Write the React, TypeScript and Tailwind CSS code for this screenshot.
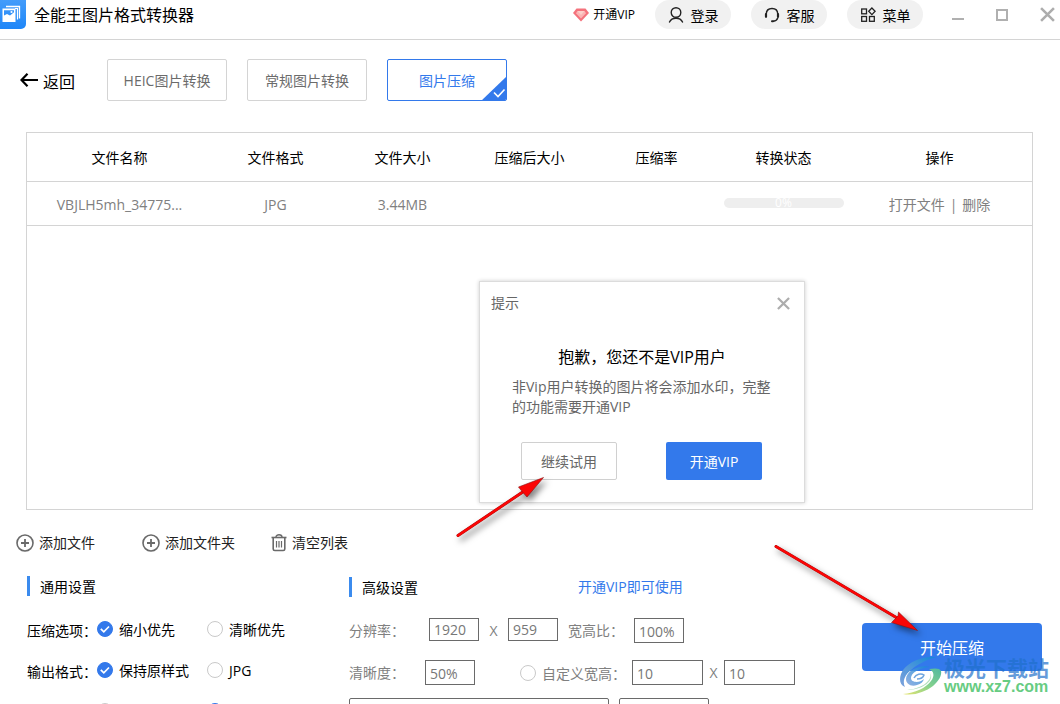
import type { ReactNode } from 'react';

function LogoIcon() {
  return (
    <svg width="26" height="29" viewBox="0 0 26 29" aria-hidden="true">
      <defs>
        <linearGradient id="logoFill" x1="0" y1="0" x2="0" y2="1">
          <stop offset="0" stopColor="#4aa0fb" />
          <stop offset="1" stopColor="#1e86f8" />
        </linearGradient>
      </defs>
      <rect x="-6" y="-5" width="32" height="34" rx="5" fill="url(#logoFill)" />
      <path d="M6 6.500h13.500v12" fill="none" stroke="#fff" strokeWidth="1.300" />
      <path d="M15 8.500h2.500v11" fill="none" stroke="#fff" strokeWidth="1.200" />
      <path
        fillRule="evenodd"
        fill="#fff"
        d="M2.500 8.500h13v13.500h-13zM4 10.200v5.300l3-1.500 3 1.500 4-3.300v-2z"
      />
      <circle cx="11.500" cy="12" r="1.100" fill="#fff" />
    </svg>
  );
}

function DiamondIcon() {
  return (
    <svg width="16" height="14" viewBox="0 0 16 14" aria-hidden="true">
      <path d="M3.500 0.500h9L16 5 8 13.500 0 5z" fill="#f4727c" />
      <path d="M4.500 3h7l1.500 2.200L8 10.500 3 5.200z" fill="#fbb4b4" />
      <path d="M4.500 3h7l-3.500 4z" fill="#fccfca" />
    </svg>
  );
}

function UserIcon() {
  return (
    <svg width="16" height="16" viewBox="0 0 16 16" fill="none" stroke="#222" strokeWidth="1.400" strokeLinecap="round" aria-hidden="true">
      <circle cx="8" cy="5.500" r="4.800" />
      <path d="M1.500 15c1.200-2.800 3.500-3.800 6.500-3.800s5.300 1 6.500 3.800" />
    </svg>
  );
}

function HeadsetIcon() {
  return (
    <svg width="16" height="16" viewBox="0 0 16 16" fill="none" stroke="#222" strokeWidth="1.400" strokeLinecap="round" aria-hidden="true">
      <path d="M2.300 7C2.300 3.500 4.700 1.500 8 1.500S13.700 3.500 13.700 7" />
      <path d="M2 7.200v2.600M14 7.200v2.600" strokeWidth="2.200" />
      <path d="M13.700 11c-.6 2-2.200 3-4.200 3.200" />
      <path d="M8 14.300h1" strokeWidth="2" />
    </svg>
  );
}

function MenuIcon() {
  return (
    <svg width="16" height="16" viewBox="0 0 16 16" fill="none" stroke="#222" strokeWidth="1.300" aria-hidden="true">
      <rect x="1.700" y="2" width="4.800" height="4.800" />
      <rect x="1.700" y="9.500" width="4.800" height="4.800" />
      <rect x="9.500" y="9.500" width="4.800" height="4.800" />
      <path d="M11.900 1l3.200 3.300-3.200 3.300-3.200-3.300z" />
    </svg>
  );
}

function PlusCircleIcon() {
  return (
    <svg width="18" height="18" viewBox="0 0 18 18" fill="none" stroke="#6a6a6a" aria-hidden="true">
      <circle cx="9" cy="9" r="8" strokeWidth="1.600" />
      <path d="M9 5v8M5 9h8" strokeWidth="1.800" />
    </svg>
  );
}

function TrashIcon() {
  return (
    <svg width="16" height="18" viewBox="0 0 16 18" fill="none" stroke="#6a6a6a" aria-hidden="true">
      <path d="M0.500 3.500h15" strokeWidth="1.600" />
      <path d="M5 3c0-3 6-3 6 0" strokeWidth="1.400" />
      <path d="M2.200 4v11c0 1 .6 1.500 1.600 1.500h8.400c1 0 1.600-.5 1.600-1.500V4" strokeWidth="1.600" />
      <path d="M5.500 7v6.500M8 7v6.500M10.500 7v6.500" strokeWidth="1.200" />
    </svg>
  );
}

function CrossIcon({ size }: { size: number }) {
  return (
    <svg width={size} height={size} viewBox="0 0 14 14" fill="none" stroke="#adadad" strokeWidth="2.400" aria-hidden="true">
      <path d="M1 1l12 12M13 1L1 13" />
    </svg>
  );
}

function Pill({ icon, children }: { icon: ReactNode; children: ReactNode }) {
  return (
    <button type="button" className="flex h-[29px] w-[76px] items-center justify-center gap-[7px] rounded-full bg-[#f1f1f1]">
      {icon}
      <span className="pt-[2px]">{children}</span>
    </button>
  );
}

function Tab({ active = false, children }: { active?: boolean; children: ReactNode }) {
  return (
    <button
      type="button"
      className={
        active
          ? 'relative h-[42px] w-[120px] overflow-hidden rounded-[2px] border border-[#3379eb] pt-[2px] text-[#3379eb]'
          : 'h-[42px] w-[120px] rounded-[2px] border border-[#d4d4d4] pt-[2px] text-[#6b6b6b]'
      }
    >
      {children}
      {active && (
        <svg className="absolute -right-px -bottom-px" width="26" height="25" viewBox="0 0 26 25" aria-hidden="true">
          <path d="M26 0v25H0z" fill="#3379eb" />
          <path d="M13 16.500l4 4 6.500-7" fill="none" stroke="#fff" strokeWidth="1.600" />
        </svg>
      )}
    </button>
  );
}

function Radio({ name, title, checked = false, children }: { name: string; title?: string; checked?: boolean; children?: ReactNode }) {
  return (
    <label className="flex items-center gap-[6px] whitespace-nowrap">
      <span className="relative block size-4">
        <input
          type="radio"
          name={name}
          aria-label={title}
          defaultChecked={checked}
          className="peer block size-4 appearance-none rounded-full border border-[#c9c9c9] bg-white checked:border-[#3379eb] checked:bg-[#3379eb]"
        />
        <svg className="pointer-events-none absolute inset-0 hidden peer-checked:block" width="16" height="16" viewBox="0 0 16 16" aria-hidden="true">
          <path d="M3.800 7.800l3 3 5.200-5.300" fill="none" stroke="#fff" strokeWidth="1.700" />
        </svg>
      </span>
      {children && <span className="pt-[2px]">{children}</span>}
    </label>
  );
}

function OptionRow({ label, name, first, second }: { label: string; name: string; first: string; second: string }) {
  return (
    <div role="radiogroup" aria-label={label} className="flex h-6 items-center">
      <span className="w-[70px] pt-[3px] whitespace-nowrap">{label}：</span>
      <div className="w-[110px]">
        <Radio name={name} checked>{first}</Radio>
      </div>
      <Radio name={name}>{second}</Radio>
    </div>
  );
}

function SectionTitle({ children }: { children: ReactNode }) {
  return <h2 className="h-5 border-l-[3px] border-[#3b8bee] pl-[10px] leading-[22px]">{children}</h2>;
}

const field = 'border border-[#6a6a6a] bg-white pl-1 text-[#777] outline-none';

const columns = ['文件名称', '文件格式', '文件大小', '压缩后大小', '压缩率', '转换状态', '操作'];

export default function App() {
  return (
    <div className="relative flex h-screen flex-col overflow-hidden bg-white font-['Open_Sans','Noto_Sans_CJK_SC',sans-serif] text-sm text-black">
      <header className="flex h-10 shrink-0 items-start border-b border-[#d4d4d4] pr-[5px]">
        <LogoIcon />
        <h1 className="ml-2 text-base leading-[30px]">全能王图片格式转换器</h1>
        <div className="ml-auto flex h-[29px] items-center">
          <button type="button" className="flex items-center gap-1 text-xs">
            <DiamondIcon />
            <span>开通VIP</span>
          </button>
          <div className="ml-5 flex gap-5">
            <Pill icon={<UserIcon />}>登录</Pill>
            <Pill icon={<HeadsetIcon />}>客服</Pill>
            <Pill icon={<MenuIcon />}>菜单</Pill>
          </div>
          <div className="ml-[29px] flex items-center gap-8">
            <button type="button" aria-label="最小化">
              <svg width="12" height="12" viewBox="0 0 12 12" aria-hidden="true"><path d="M0 10h12" stroke="#b0b0b0" strokeWidth="2" /></svg>
            </button>
            <button type="button" aria-label="最大化">
              <svg width="12" height="12" viewBox="0 0 12 12" aria-hidden="true"><rect x="1" y="1" width="10" height="10" fill="none" stroke="#b0b0b0" strokeWidth="2" /></svg>
            </button>
            <button type="button" aria-label="关闭"><CrossIcon size={15} /></button>
          </div>
        </div>
      </header>

      <nav className="flex h-[92px] shrink-0 items-center pt-px pb-[13px] pl-5">
        <button type="button" className="flex w-[87px] items-center gap-[5px] text-base">
          <svg width="18" height="14" viewBox="0 0 18 14" fill="none" stroke="#000" strokeWidth="2.200" aria-hidden="true">
            <path d="M1.500 7H18M7.500 0.800L1.500 7l6 6.200" />
          </svg>
          <span className="pt-[3px]">返回</span>
        </button>
        <div className="flex gap-5">
          <Tab>HEIC图片转换</Tab>
          <Tab>常规图片转换</Tab>
          <Tab active>图片压缩</Tab>
        </div>
      </nav>

      <main className="mr-[27px] ml-[26px] min-h-0 flex-1 border border-[#d4d4d4]">
        <table className="w-full table-fixed border-collapse text-center">
          <colgroup>
            <col className="w-[185px]" />
            <col className="w-[127px]" />
            <col className="w-[127px]" />
            <col className="w-[127px]" />
            <col className="w-[127px]" />
            <col className="w-[127px]" />
            <col />
          </colgroup>
          <thead>
            <tr className="h-12 border-b border-[#d4d4d4]">
              {columns.map((c) => (
                <th key={c} scope="col" className="pt-[3px] font-normal">{c}</th>
              ))}
            </tr>
          </thead>
          <tbody className="text-[#808080]">
            <tr className="h-11 border-b border-[#d4d4d4]">
              <td className="pt-[3px]">VBJLH5mh_34775...</td>
              <td className="pt-[3px]">JPG</td>
              <td className="pt-[3px]">3.44MB</td>
              <td />
              <td />
              <td>
                <div role="progressbar" aria-label="转换状态" aria-valuenow={0} className="mx-auto h-[10px] w-[120px] rounded-full bg-[#eee] text-xs leading-[10px] text-white">
                  0%
                </div>
              </td>
              <td className="pt-[3px]">
                <div className="flex justify-center gap-[5px]">
                  <button type="button">打开文件</button>
                  <span>|</span>
                  <button type="button">删除</button>
                </div>
              </td>
            </tr>
          </tbody>
        </table>
      </main>

      <footer className="h-[194px] shrink-0 overflow-hidden pt-[21px]">
        <div className="flex h-6 items-center pl-4 text-[#222]">
          <button type="button" className="mr-[47px] flex items-center gap-[5px]"><PlusCircleIcon />添加文件</button>
          <button type="button" className="mr-9 flex items-center gap-[5px]"><PlusCircleIcon />添加文件夹</button>
          <button type="button" className="flex items-center gap-[5px]"><TrashIcon />清空列表</button>
        </div>

        <div className="mt-[21px] flex pr-[18px] pl-[27px]">
          <section className="w-[322px] shrink-0">
            <SectionTitle>通用设置</SectionTitle>
            <div className="mt-[21px] flex flex-col gap-[17px]">
              <OptionRow label="压缩选项" name="mode" first="缩小优先" second="清晰优先" />
              <OptionRow label="输出格式" name="format" first="保持原样式" second="JPG" />
              <div role="radiogroup" aria-label="输出目录" className="flex h-6 items-center gap-[94px] pl-[70px]">
                <Radio name="folder" title="原文件目录" />
                <Radio name="folder" title="自定义" checked />
              </div>
            </div>
          </section>

          <section className="text-[#808080]">
            <div className="flex items-center text-black">
              <SectionTitle>高级设置</SectionTitle>
              <a href="#vip" className="ml-40 leading-[22px] text-[#3379eb]">开通VIP即可使用</a>
            </div>
            <div className="mt-5 flex h-[25px] items-center">
              <label htmlFor="res-w" className="w-20">分辨率：</label>
              <input id="res-w" defaultValue="1920" className={`${field} h-[23px] w-[50px] self-start`} />
              <span className="w-[29px] text-center">X</span>
              <input aria-label="分辨率高度" defaultValue="959" className={`${field} h-[23px] w-[50px] self-start`} />
              <label htmlFor="ratio" className="ml-[10px] w-[66px] whitespace-nowrap">宽高比：</label>
              <input id="ratio" defaultValue="100%" className={`${field} h-[25px] w-[50px] pt-[2px]`} />
            </div>
            <div className="mt-[17px] flex h-[25px] items-center">
              <label htmlFor="clarity" className="w-[76px]">清晰度：</label>
              <input id="clarity" defaultValue="50%" className={`${field} h-[25px] w-[50px] pt-[2px]`} />
              <div className="ml-[45px] w-[112px]">
                <Radio name="custom">自定义宽高：</Radio>
              </div>
              <input aria-label="自定义宽" defaultValue="10" className={`${field} h-[25px] w-[71px] pt-[2px]`} />
              <span className="w-[21px] text-center">X</span>
              <input aria-label="自定义高" defaultValue="10" className={`${field} h-[25px] w-[71px] pt-[2px]`} />
            </div>
            <div className="mt-[13px] flex gap-[10px]">
              <input aria-label="输出路径" className={`${field} h-[26px] w-[260px] rounded-[2px]`} />
              <button type="button" aria-label="更改目录" className="h-[26px] w-[90px] rounded-[2px] border border-[#6a6a6a]" />
            </div>
          </section>

          <button type="button" className="mt-[47px] ml-auto h-12 w-[180px] shrink-0 rounded bg-[#3379eb] pt-[2px] text-base text-white">
            开始压缩
          </button>
        </div>
      </footer>

      <div role="dialog" aria-labelledby="tip-title" className="absolute top-[281px] left-[479px] w-[326px] border border-[#dcdcdc] bg-white shadow-[0_0_4px_rgba(0,0,0,0.2)]">
        <div className="flex h-[42px] items-center justify-between pr-[14px] pl-[11px] text-[#666]">
          <span id="tip-title">提示</span>
          <button type="button" aria-label="关闭提示"><CrossIcon size={13} /></button>
        </div>
        <h3 className="mt-[21px] text-center text-base">抱歉，您还不是VIP用户</h3>
        <p className="mt-2 px-8 leading-5 text-[#666]">非Vip用户转换的图片将会添加水印，完整的功能需要开通VIP</p>
        <div className="mt-[25px] mb-[22px] flex justify-between pr-[42px] pl-[41px]">
          <button type="button" className="h-[38px] w-24 rounded-[2px] border border-[#d0d0d0] pt-[2px] text-[#666]">继续试用</button>
          <button type="button" className="h-[38px] w-24 rounded-[2px] bg-[#3379eb] pt-[2px] text-white">开通VIP</button>
        </div>
      </div>

      <svg className="pointer-events-none absolute top-[470px] left-[450px] drop-shadow-[3px_4px_3px_rgba(0,0,0,0.5)]" width="110" height="80" viewBox="450 470 110 80" aria-hidden="true">
        <path d="M458 535.500L525 490.500" stroke="#a01010" strokeWidth="3" strokeLinecap="round" />
        <path d="M458 535.500L525 490.500" stroke="#fb0505" strokeWidth="2.400" strokeLinecap="round" />
        <path d="M543.500 477.500L527 497l-4-4.500-4.500-5.500z" fill="#fb0505" stroke="#8c1010" strokeWidth="0.600" />
      </svg>
      <svg className="pointer-events-none absolute top-[538px] left-[768px] drop-shadow-[3px_4px_3px_rgba(0,0,0,0.5)]" width="170" height="110" viewBox="768 538 170 110" aria-hidden="true">
        <path d="M776 546.500L898 618.500" stroke="#a01010" strokeWidth="3" strokeLinecap="round" />
        <path d="M776 546.500L898 618.500" stroke="#fb0505" strokeWidth="2.400" strokeLinecap="round" />
        <path d="M917.500 630.500L898.500 612l-.5 4-6.500 6.500z" fill="#fb0505" stroke="#8c1010" strokeWidth="0.600" />
      </svg>

      <div className="pointer-events-none absolute right-[11px] bottom-[8px] flex items-end gap-[2px]">
        <svg width="42" height="39" viewBox="0 0 42 39" aria-hidden="true">
          <defs>
            <linearGradient id="swirlBlue" x1="0" y1="1" x2="1" y2="0">
              <stop offset="0" stopColor="#7fa3dc" />
              <stop offset="1" stopColor="#1488d8" />
            </linearGradient>
            <linearGradient id="swirlGreen" x1="0" y1="1" x2="1" y2="0">
              <stop offset="0" stopColor="#e8e470" />
              <stop offset="0.500" stopColor="#86d28c" />
              <stop offset="1" stopColor="#50b8a0" />
            </linearGradient>
          </defs>
          <path d="M36 0C21-1 5 6 1 17c-2 6-1 11 4 13-3-6 0-12 6-17C18 7 26 3 36 0z" fill="url(#swirlBlue)" />
          <path d="M30 10C18 7 6 15 6 22c0 5 5 8 11 6 4-1 6-3 7-6-4 4-13 4-13-1 0-5 8-10 19-11z" fill="url(#swirlBlue)" opacity="0.850" />
          <path d="M14 21c2-4 7-5 10-3-1 3-4 4-7 4" fill="none" stroke="#6fa5df" strokeWidth="1.500" />
          <path d="M29 12c6-1 11-1 12 2 1 4-2 10-8 15-8 6-19 10-30 8 12-1 23-6 28-13 4-5 3-10-2-12z" fill="url(#swirlGreen)" />
          <path d="M7 33c9-1 17-4 21-9 3-3 3-6 2-8 5 7-7 17-23 17z" fill="#8ad09c" opacity="0.700" />
        </svg>
        <div className="font-bold">
          <div className="font-['Noto_Sans_CJK_SC',sans-serif] text-[21px] leading-[22px] text-[#1f70ca]/70">极光下载站</div>
          <div className="font-['Liberation_Sans',sans-serif] text-base leading-[18px] text-[#67cc82]">www.xz7.com</div>
        </div>
      </div>
    </div>
  );
}
